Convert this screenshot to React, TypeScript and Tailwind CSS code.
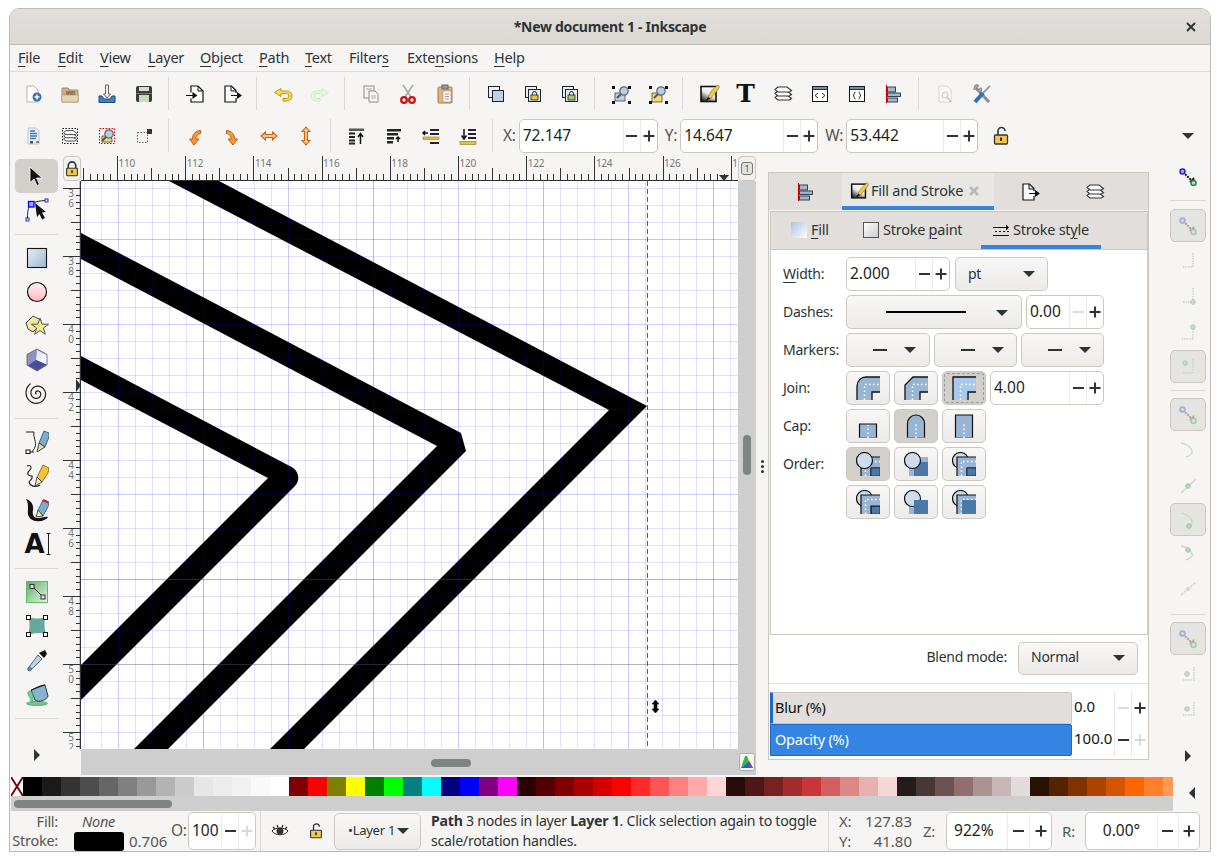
import React from "react";

const I = ({ children, s = 24, className = "" }: { children?: React.ReactNode; s?: number; className?: string }) => (
  <svg width={s} height={s} viewBox="0 0 24 24" className={"block shrink-0 " + className}>{children}</svg>
);

const Lock = ({ open = false, s = 24 }: { open?: boolean; s?: number }) => (
  <I s={s}>
    {open ? <path d="M9 11V7a3.5 3.5 0 0 1 7 0" fill="none" stroke="#2e3436" strokeWidth="1.6" /> : <path d="M7.5 11V8a4.5 4.5 0 0 1 9 0v3" fill="none" stroke="#2e3436" strokeWidth="2" />}
    <rect x="5.5" y="11" width="13" height="9" rx="1" fill="#f5c84a" stroke="#2e3436" strokeWidth="1.3" />
    <rect x="11" y="13.5" width="2" height="3.5" fill="#2e3436" />
  </I>
);

const Mag = ({ x, y }: { x: number; y: number }) => (
  <g>
    <path d={`M${x - 3} ${y + 3}L${x - 7} ${y + 7}`} stroke="#555" strokeWidth="2" />
    <circle cx={x} cy={y} r="4.2" fill="#b7cde2" stroke="#5b6770" strokeWidth="1.2" />
  </g>
);

const Corners = ({ c = "#111" }: { c?: string }) => (
  <g fill={c}>
    <rect x="3" y="4" width="3" height="3" /><rect x="19" y="4" width="3" height="3" /><rect x="3" y="19" width="3" height="3" /><rect x="19" y="19" width="3" height="3" />
  </g>
);

const Stack = () => (
  <g fill="#fff" stroke="#2e3436" strokeWidth="1.100">
    <path d="M4 15.500l3-2.500h9l4.500 3.500-2 1.500H7z" />
    <path d="M4 11.500l3-2.500h9l4.500 3.500-2 1.500H7z" />
    <path d="M4 7.500l3-2.500h9l4.500 3.500-2 1.500H7z" />
  </g>
);

const FillStrokeIcon = () => (
  <g>
    <defs><linearGradient id="fsg" x1=".7" y1="0" x2=".1" y2="1"><stop offset="0" stopColor="#fff" /><stop offset=".45" stopColor="#eee" /><stop offset="1" stopColor="#111" /></linearGradient></defs>
    <rect x="4" y="4.500" width="15" height="15" fill="url(#fsg)" stroke="#111" strokeWidth="1.600" />
    <path d="M11 15c2-5 5.500-9 10-12l1.500 1.500c-2 4-5 8-9.500 12z" fill="#f6c945" stroke="#7a5c10" strokeWidth=".6" />
    <path d="M11 15l2.500 1.500L8.500 19z" fill="#111" />
  </g>
);

const DocOut = () => (
  <I>
    <path d="M5 4h6.500L16 8.500V20H5z" fill="#fff" />
    <path d="M16 11V8.500L11.500 4H5V20H16V16" fill="none" stroke="#111" strokeWidth="1.200" />
    <path d="M11 4v5h5" fill="none" stroke="#111" />
    <path d="M11 13.500h9M17.500 11l3.500 2.500-3.500 2.500z" fill="#111" stroke="#111" strokeWidth="1.100" />
  </I>
);

const Undo = ({ flip = false, f, c }: { flip?: boolean; f: string; c: string }) => (
  <I><g transform={flip ? "translate(24 0) scale(-1 1)" : ""}><path d="M10 6.500L3.500 10.500 10 14.500v-3h5.500a2.500 2.500 0 0 1 0 5h-3.500v2.500h4a5 5 0 0 0 0-10H10z" fill={f} stroke={c} strokeWidth="1" /></g></I>
);

const Rot = ({ flip = false }: { flip?: boolean }) => (
  <I><g transform={flip ? "translate(24 0) scale(-1 1)" : ""}><path d="M11 21l-4.500-6H9.500c0-4.500 2.500-8 8-8.500v3C14 10.500 13 12 13 15h3z" fill="#f59a3c" stroke="#c25c0a" strokeWidth="1" /></g></I>
);

const Bars = ({ variant }: { variant: number }) => (
  <I>
    {variant === 1 && <g><rect x="4" y="4.500" width="15" height="2.500" fill="#555" /><rect x="4" y="8.500" width="6" height="2" fill="#222" /><rect x="4" y="12" width="6" height="2" fill="#222" /><rect x="4" y="15.500" width="6" height="2" fill="#222" /><rect x="4" y="18.500" width="6" height="2" fill="#222" /><path d="M15.500 20V11M13 13l2.500-3.500L18 13" fill="none" stroke="#111" strokeWidth="1.500" /></g>}
    {variant === 2 && <g><rect x="5" y="5" width="14" height="2.500" fill="#222" /><rect x="5" y="9" width="11" height="2.500" fill="#222" /><rect x="5" y="13" width="7" height="2.500" fill="#222" /><rect x="5" y="17" width="6" height="2.500" fill="#222" /><path d="M16 18v-5M14 15l2-2 2 2" fill="none" stroke="#111" strokeWidth="1.500" /></g>}
    {variant === 3 && <g><rect x="11" y="5" width="9" height="2" fill="#222" /><path d="M9 9H4M6 7L4 9l2 2" fill="none" stroke="#111" strokeWidth="1.500" /><rect x="11" y="9" width="9" height="2" fill="#222" /><rect x="4" y="13" width="16" height="2.500" fill="#e6c13c" stroke="#7a6512" strokeWidth=".5" /><rect x="11" y="18" width="9" height="2" fill="#222" /></g>}
    {variant === 4 && <g><rect x="12" y="5" width="8" height="2" fill="#222" /><rect x="12" y="9" width="8" height="2" fill="#222" /><rect x="12" y="13" width="8" height="2" fill="#222" /><path d="M8 5v9M5.500 11.500L8 15l2.500-3.500" fill="none" stroke="#111" strokeWidth="1.500" /><rect x="4" y="17.500" width="16" height="3" fill="#e6c13c" stroke="#7a6512" strokeWidth=".5" /></g>}
  </I>
);

const AlignI = () => (
  <I>
    <path d="M4.500 3v18" stroke="#cc0000" strokeWidth="1.100" />
    <rect x="5.500" y="5" width="8" height="5" fill="#9db8d6" stroke="#2e3436" strokeWidth=".9" />
    <rect x="5.500" y="11" width="13" height="3.500" fill="#9db8d6" stroke="#2e3436" strokeWidth=".9" />
    <rect x="5.500" y="16" width="10" height="4" fill="#9db8d6" stroke="#2e3436" strokeWidth=".9" />
  </I>
);

const icons1: (React.ReactNode | "sep")[] = [
  <I key="n"><path d="M6 4h7l4 4v12H6z" fill="#fff" stroke="#b5b5b5" /><circle cx="16" cy="15" r="4.500" fill="#3a6fb0" /><path d="M13.500 15h5M16 12.500v5" stroke="#fff" strokeWidth="1.500" /></I>,
  <I key="o"><path d="M4 6h6l2 2h8v12H4z" fill="#c9ad84" stroke="#a98f6a" /><rect x="8" y="9" width="9" height="4" fill="#7d6a4f" opacity=".75" /><path d="M3.500 13h17l-.5 7H4z" fill="#e4d3b4" stroke="#b59c77" strokeWidth=".7" /></I>,
  <I key="i"><path d="M10.500 3h3v9h2L12 16 8.500 12h2z" fill="#eeeeec" stroke="#666" /><path d="M4 14h3l2 3h6l2-3h3v6.500H4z" fill="#3f7fc4" stroke="#204a87" /></I>,
  <I key="s"><rect x="4" y="4" width="16" height="16" rx="2" fill="#3a3d3c" /><rect x="7" y="5" width="10" height="4" fill="#d8d8d8" /><rect x="7" y="13" width="10" height="7" fill="#c5dcbc" /><rect x="4" y="11" width="16" height="1" fill="#777" /></I>,
  "sep",
  <I key="im"><path d="M8 4h7l5 5v11H8z" fill="#fff" /><path d="M8 10.500V4h7l5 5v11H8v-3.500" fill="none" stroke="#111" strokeWidth="1.200" /><path d="M15 4v5h5" fill="none" stroke="#111" /><path d="M3 13.500h9M10 11l3.500 2.500L10 16z" fill="#111" stroke="#111" strokeWidth="1.100" /></I>,
  <DocOut key="ex" />,
  "sep",
  <Undo key="u" f="#f8dd56" c="#bd9a0c" />,
  <Undo key="r" flip f="#eaf4e4" c="#d3e6ca" />,
  "sep",
  <I key="cp"><rect x="5" y="4" width="10" height="12" fill="#f3f3f2" stroke="#8c8c8c" /><path d="M10 9h6l3 3v8h-9z" fill="#f9f9f9" stroke="#8c8c8c" /><path d="M12 14h5M12 16h5M7 7h6" stroke="#aaa" /></I>,
  <I key="ct"><path d="M9 15L17 3M15 15L7 3" stroke="#a8a8a8" strokeWidth="1.600" /><circle cx="8" cy="18" r="2.800" fill="none" stroke="#c81414" strokeWidth="2.300" /><circle cx="16" cy="18" r="2.800" fill="none" stroke="#c81414" strokeWidth="2.300" /></I>,
  <I key="pa"><rect x="5" y="5" width="14" height="16" rx="1" fill="#dcb57f" stroke="#a07c45" /><rect x="9" y="3" width="6" height="4" fill="#999" stroke="#666" /><rect x="10" y="9" width="8" height="11" fill="#fbfbfb" stroke="#999" strokeWidth=".7" /><path d="M12 12h4M12 14.500h4M12 17h4" stroke="#999" /></I>,
  "sep",
  <I key="d1"><rect x="4.500" y="4.500" width="11" height="11" fill="#e8eef5" stroke="#222" /><rect x="8.500" y="8.500" width="11" height="11" fill="#bcd0e6" stroke="#222" /></I>,
  <I key="d2"><rect x="4.500" y="4.500" width="11" height="11" fill="#e8eef5" stroke="#222" /><rect x="7.500" y="7.500" width="12" height="12" fill="#e8eef5" stroke="#222" /><rect x="10" y="13" width="7" height="5" fill="#f1c232" stroke="#222" strokeWidth=".8" /><path d="M11.500 13v-1.500a2 2 0 0 1 4 0V13" fill="none" stroke="#222" /></I>,
  <I key="d3"><rect x="4.500" y="4.500" width="11" height="11" fill="#e8eef5" stroke="#222" /><rect x="7.500" y="7.500" width="12" height="12" fill="#e8eef5" stroke="#222" /><rect x="10" y="13" width="7" height="5" fill="#a9c76a" stroke="#222" strokeWidth=".8" /><path d="M11.500 13v-1.500a2 2 0 0 1 4 0V13" fill="none" stroke="#222" /></I>,
  "sep",
  <I key="z1"><Corners /><rect x="6" y="11" width="10" height="8" fill="#bcd0e6" stroke="#444" strokeWidth=".8" /><Mag x={15} y={9} /></I>,
  <I key="z2"><Corners /><path d="M6 11h6l4 3v6H6z" fill="#f5d76e" stroke="#444" strokeWidth=".8" /><Mag x={15} y={9} /></I>,
  "sep",
  <I key="fs"><FillStrokeIcon /></I>,
  <span key="T" className="block w-[24px] text-center text-[25px] leading-[24px] font-bold text-[#111] [font-family:'DejaVu_Serif',serif] tracking-normal">T</span>,
  <I key="ly"><Stack /></I>,
  <I key="xml"><rect x="4.500" y="4.500" width="15" height="15" fill="#fff" stroke="#111" /><rect x="4.500" y="4.500" width="15" height="3" fill="#6f8ca8" stroke="#111" strokeWidth=".8" /><path d="M10 11l-3 2.500 3 2.500M14 11l3 2.500-3 2.500" fill="none" stroke="#222" /></I>,
  <I key="obj"><rect x="4.500" y="4.500" width="15" height="15" fill="#fff" stroke="#111" /><rect x="4.500" y="4.500" width="15" height="3" fill="#6f8ca8" stroke="#111" strokeWidth=".8" /><path d="M10.500 10c-2 0-.5 3-2.500 3.500 2 .500 .5 3.500 2.500 3.500M13.500 10c2 0 .5 3 2.500 3.500-2 .500-.5 3.500-2.500 3.500" fill="none" stroke="#222" /></I>,
  <AlignI key="al" />,
  "sep",
  <I key="dp"><g opacity=".55"><path d="M6 4h8l4 4v12H6z" fill="#fff" stroke="#bbb" /><circle cx="12" cy="13" r="3" fill="none" stroke="#999" /><path d="M14 15l4 5" stroke="#999" strokeWidth="1.500" /></g></I>,
  <I key="tl"><path d="M6 6l13 14" stroke="#8a9199" strokeWidth="3.200" /><path d="M3.500 7.500L5 3l3-.500 1 1.500-2.500 2 .5 1.500 1.500.5 2-2.500 1.500 1-1 3.500" fill="#9aa0a6" stroke="#666" strokeWidth=".5" /><path d="M20 4l-8 8" stroke="#9aa0a6" strokeWidth="1.800" /><path d="M13 11L5 20" stroke="#2f6fb5" strokeWidth="4" /></I>,
];

const icons2: (React.ReactNode | "sep")[] = [
  <I key="a"><path d="M7 4h8l3 3v13H7z" fill="#eef2f6" stroke="#b9c2cc" /><path d="M9 7h5M9 9.500h7M9 12h7M9 14.500h6" stroke="#3c78b5" strokeWidth="1.300" /><rect x="9" y="17" width="3" height="2.500" fill="#555" /><path d="M15 18h3" stroke="#111" /></I>,
  <I key="b"><rect x="4.500" y="4.500" width="15" height="15" fill="none" stroke="#111" strokeDasharray="1.500 1.500" /><g transform="translate(2.400 2.600) scale(.8)"><Stack /></g></I>,
  <I key="c"><rect x="4.500" y="4.500" width="15" height="15" fill="none" stroke="#d00" strokeDasharray="1.500 1.500" /><path d="M7 12h7l3 3v3H7z" fill="#f5d76e" stroke="#444" strokeWidth=".8" /><Mag x={14} y={10} /></I>,
  <I key="d"><rect x="5.500" y="8.500" width="10" height="10" fill="none" stroke="#666" strokeDasharray="1.500 1.500" /><rect x="15" y="5" width="5" height="5" fill="#333" /></I>,
  "sep",
  <Rot key="r1" />,
  <Rot key="r2" flip />,
  <I key="fh"><path d="M4 12l4.500-4v2.500h7V8l4.500 4-4.500 4v-2.500h-7V16z" fill="#fbc58a" stroke="#c9640e" strokeWidth="1.100" /></I>,
  <I key="fv"><path d="M12 3l4 4.500h-2.500v9H16L12 21l-4-4.500h2.500v-9H8z" fill="#fbc58a" stroke="#c9640e" strokeWidth="1.100" /></I>,
  "sep",
  <Bars key="b1" variant={1} />,
  <Bars key="b2" variant={2} />,
  <Bars key="b3" variant={3} />,
  <Bars key="b4" variant={4} />,
  "sep",
];

const ToolRow = ({ items }: { items: (React.ReactNode | "sep")[] }) => (
  <>
    {items.map((it, i) =>
      it === "sep" ? (
        <div key={i} className="ml-[6px] mr-[7px] w-px self-center h-[33px] bg-[#dcd9d5]" />
      ) : (
        <div key={i} className="w-[37px] h-[34px] flex items-center justify-center">{it}</div>
      ),
    )}
  </>
);

const MinusI = ({ off }: { off?: boolean }) => (
  <span className={"block w-[11px] h-[2px] " + (off ? "bg-[#dcdcda]" : "bg-[#2e3436]")} />
);
const PlusI = ({ off }: { off?: boolean }) => (
  <svg width="12" height="12" viewBox="0 0 12 12" className="block"><path d="M0.500 6h11M6 .5v11" stroke={off ? "#d8d8d6" : "#2e3436"} strokeWidth="2" /></svg>
);

const Spin = ({ v, w, h = "h-[34px]", b = "w-[17px]", mOff, pOff, t = "pl-[3px] text-left" }: { v: string; w: string; h?: string; b?: string; mOff?: boolean; pOff?: boolean; t?: string }) => (
  <div className={"flex shrink-0 rounded-[5px] border border-[#cdc7c2] bg-white overflow-hidden " + w + " " + h}>
    <div className={"flex-1 self-center text-[15.5px] tracking-normal text-[#1c1f20] " + t}>{v}</div>
    <div className={"border-l border-[#ecebe9] flex items-center justify-center " + b}><MinusI off={mOff} /></div>
    <div className={"border-l border-[#ecebe9] flex items-center justify-center " + b}><PlusI off={pOff} /></div>
  </div>
);

const Down = ({ c = "" }: { c?: string }) => (
  <svg width="14" height="8" viewBox="0 0 14 8" className={"block " + c}><path d="M1 1h12L7 7z" fill="#2e3436" /></svg>
);

const Btn = ({ children, w, h = "h-[34px]", active, extra = "" }: { children?: React.ReactNode; w: string; h?: string; active?: boolean; extra?: string }) => (
  <div className={"shrink-0 rounded-[5px] border border-[#cdc7c2] flex items-center " + (active ? "bg-[#d3cfcb] " : "bg-linear-to-b from-[#f8f7f6] to-[#ecebe9] ") + w + " " + h + " " + extra}>{children}</div>
);

const U = ({ children }: { children: React.ReactNode }) => <span className="underline underline-offset-[3px] decoration-1">{children}</span>;

const menus = [
  { n: <><U>F</U>ile</>, c: "w-[40px]" },
  { n: <><U>E</U>dit</>, c: "w-[42px]" },
  { n: <><U>V</U>iew</>, c: "w-[48px]" },
  { n: <><U>L</U>ayer</>, c: "w-[52px]" },
  { n: <><U>O</U>bject</>, c: "w-[59px]" },
  { n: <><U>P</U>ath</>, c: "w-[46px]" },
  { n: <><U>T</U>ext</>, c: "w-[44px]" },
  { n: <>Filter<U>s</U></>, c: "w-[58px]" },
  { n: <>Exte<U>n</U>sions</>, c: "w-[87px]" },
  { n: <><U>H</U>elp</>, c: "w-[40px]" },
];

const spiral = (() => {
  const pts: string[] = [];
  for (let t = 0.6; t < 15.2; t += 0.25) {
    const r = 0.78 * t;
    pts.push(`${(12 + r * Math.cos(t + 1.6)).toFixed(2)} ${(11.5 + r * Math.sin(t + 1.6)).toFixed(2)}`);
  }
  return "M" + pts.join("L");
})();

/* left tools */
const tools: (React.ReactNode | "sep")[] = [
  <I key="sel"><path d="M5 3v15.500l4-3.500 3 6.500 2.500-1-3-6.500H17z" fill="#111" stroke="#fff" strokeWidth=".8" /></I>,
  <I key="node"><path d="M2.500 20C2.500 13 3 10 6 6M6 6C11 3 15 3 20 2.500" fill="none" stroke="#222" /><rect x="3.500" y="3.500" width="5.500" height="5.500" fill="#a8a8ff" stroke="#00f" strokeWidth="1.300" /><rect x="20" y="1" width="3" height="3" fill="#dde" stroke="#33c" /><rect x="1" y="20" width="3" height="3" fill="#dde" stroke="#33c" /><path d="M10 5l11 9-4 .500 3 5.500-3 1.500-2.500-5.500L12 19z" fill="#111" /></I>,
  "sep",
  <I key="rect"><defs><linearGradient id="rc" x1="0" y1="0" x2="1" y2="1"><stop offset="0" stopColor="#e6eef6" /><stop offset="1" stopColor="#9ab8d4" /></linearGradient></defs><rect x="2.500" y="2.500" width="19" height="19" fill="url(#rc)" stroke="#111" strokeWidth="1.100" /></I>,
  <I key="circ"><defs><linearGradient id="ci" x1="0" y1="0" x2="0" y2="1"><stop offset="0" stopColor="#fff2f4" /><stop offset="1" stopColor="#ffb8c0" /></linearGradient></defs><circle cx="12" cy="12" r="9.500" fill="url(#ci)" stroke="#111" strokeWidth="1.200" /></I>,
  <I key="star"><path d="M1 9l7-7 8 4-2 6-6 6-5-3z" fill="#f3e6a2" stroke="#444" /><path d="M15 4l2.100 6.100 6.500.1-5.200 3.800 1.900 6.300-5.300-3.700-5.300 3.700 1.900-6.300-5.200-3.800 6.500-.1z" fill="#f6eb8c" stroke="#555" /></I>,
  <I key="box"><defs><linearGradient id="bx" x1="0" y1="0" x2="1" y2="1"><stop offset="0" stopColor="#dfe0f2" /><stop offset="1" stopColor="#fff" /></linearGradient></defs><path d="M12 1l10 5.500v10.500l-10 6-10-6V6.500z" fill="#8f8fc4" stroke="#666" strokeWidth=".9" /><path d="M12 2l9.500 5v9.500L11 12z" fill="url(#bx)" /><path d="M3 17.500l8-5.500 10.500 4.500-9.500 6z" fill="#4a4a96" /></I>,
  <I key="sp"><path d={spiral} fill="none" stroke="#222" strokeWidth="1.200" /></I>,
  "sep",
  <I key="pen"><path d="M1 2H9C8 8 12 12 10 17 9 20 8 20 7 22" fill="none" stroke="#222" /><rect x="1" y="20" width="4" height="3.500" fill="#fff" stroke="#111" /><path d="M5 22h4" stroke="#222" /><path d="M14 13L19 1l5 2v4l-4 10z" fill="#79aed0" stroke="#345" strokeWidth=".8" /><path d="M14 13l6 4-8 5z" fill="#e9d7a4" stroke="#222" strokeWidth=".8" /></I>,
  <I key="pcl"><path d="M2 2c5-2 5 3 2 5-3 3 0 5 3 5 1 4-2 4-3 6 1 4 6 6 11 3" fill="none" stroke="#222" strokeWidth="1.100" /><path d="M12 13l6-12 6 3-1 5-6 9z" fill="#f6c034" stroke="#7a5c10" strokeWidth=".8" /><path d="M10 22l2-9 5 5z" fill="#f5e9c8" stroke="#222" strokeWidth=".8" /></I>,
  <I key="cal"><path d="M1 1C5 2 9 6 8 12 7 17 9 20 13 20c4 0 7-2 10-1-2 3-7 5-12 4C5 22 2 18 3 12 3 7 3 4 1 1z" fill="#111" /><path d="M13 12l5-10 6 2-1 5-5 9z" fill="#79aed0" stroke="#345" strokeWidth=".7" /><path d="M17 3l6 2.500 .5-2L18.500 1z" fill="#c22" /><path d="M11 19l2-7 5 6z" fill="#f5e9c8" stroke="#222" strokeWidth=".8" /></I>,
  <div key="A" className="relative w-[24px] h-[24px] flex items-center">
    <span className="block w-[20px] text-center text-[26px] leading-[24px] font-bold text-[#111] tracking-normal [font-family:'DejaVu_Sans',sans-serif]">A</span>
    <svg width="5" height="22" viewBox="0 0 5 22" className="block shrink-0 ml-[1px]"><path d="M.5.5h4M2.500.5v21M.5 21.500h4" fill="none" stroke="#222" /></svg>
  </div>,
  "sep",
  <I key="grad"><defs><linearGradient id="gr" x1="0" y1="0" x2="1" y2="1"><stop offset="0" stopColor="#58b05c" /><stop offset="1" stopColor="#e8f4e8" /></linearGradient></defs><rect x="1.500" y="1.500" width="21" height="21" fill="url(#gr)" stroke="#63b866" /><path d="M7 6l11 11" stroke="#333" /><rect x="5" y="4.500" width="4" height="4" fill="#ddd" stroke="#333" /><rect x="16" y="15" width="4" height="4" fill="#ddd" stroke="#333" /></I>,
  <I key="mesh"><path d="M3.500 3C9 5 14 5 20.500 3 19 9 19 14 21 20 15 18 9 19 3 21 5 14 5 9 3.500 3z" fill="#68a69e" /><g fill="#fff" stroke="#111"><rect x="1.500" y="1.500" width="4" height="4" /><rect x="18.500" y="1.500" width="4" height="4" /><rect x="1.500" y="18.500" width="4" height="4" /><rect x="18.500" y="18.500" width="4" height="4" /></g></I>,
  <I key="dr"><path d="M13 7l4 4-10 10c-2 1.500-4 0-3-2z" fill="#bcd4ea" stroke="#345" strokeWidth=".8" /><path d="M14 5l5 5 3-4-2-4z" fill="#111" /><circle cx="4.500" cy="21" r="2" fill="#5a8bc0" stroke="#345" strokeWidth=".5" /></I>,
  <I key="bk"><ellipse cx="12" cy="21.500" rx="10.500" ry="2" fill="#7cc484" stroke="#2a6" strokeWidth=".7" /><path d="M6 8l14-5 3 11c-1 4-9 7-13 4z" fill="#85b4d4" stroke="#334" /><path d="M5 9c-2 0-3 2-2 3 1 3 3 4 3 8h2c0-5 0-8-1-10z" fill="#7fc786" stroke="#2a6" strokeWidth=".6" /><path d="M6 9c3-3 11-6 14-6" fill="none" stroke="#111" /></I>,
  "sep",
];

const ToolSep = () => (
  <div className="h-[14px] flex items-center justify-center"><div className="w-[43px] h-px bg-[#dcd9d5]" /></div>
);
const RightArrow = () => (
  <svg width="8" height="12" viewBox="0 0 8 12" className="block"><path d="M1 0l6 6-6 6z" fill="#2e3436" /></svg>
);

/* rulers */
const Ruler = () => {
  const ticks = [];
  for (let i = -5; i < 100; i++) {
    const x = 36 + i * 6.82;
    const k = i + 10;
    const len = k % 10 === 0 ? 25 : k % 5 === 0 ? 13 : 7;
    const px = Math.round(x) + 0.5;
    if (px > 0 && px < 657) ticks.push(<path key={i} d={`M${px} 25V${25 - len}`} stroke="#2e3436" />);
  }
  const labels = ["110", "112", "114", "116", "118", "120", "122", "124", "126", "12"];
  return (
    <svg width="657" height="25" className="block shrink-0">
      {ticks}
      {labels.map((l, i) => (
        <text key={l} x={36 + i * 68.2 + 1.500} y={10.500} fontSize="10" fill="#777" fontFamily="Noto Sans">{l}</text>
      ))}
      <path d="M0 25h657" stroke="#2e3436" strokeWidth="2" />
      <path d="M638 19h10l-5 6z" fill="#2e3436" />
    </svg>
  );
};

const VRuler = () => {
  const ticks = [];
  for (let i = 0; i < 83; i++) {
    const y = 7 + i * 6.8;
    const left = i % 10 === 0 ? 0 : i % 5 === 0 ? 8 : 13;
    ticks.push(<path key={i} d={`M${left} ${Math.round(y) + 0.5}H18`} stroke="#2e3436" />);
  }
  const labels = ["36", "38", "40", "42", "44", "46", "48", "50", "52"];
  return (
    <svg width="18" height="568" className="block shrink-0">
      {ticks}
      {labels.map((l, i) => (
        <text key={l} fontSize="10" fill="#777" fontFamily="Noto Sans" textAnchor="middle">
          <tspan x="8" y={15.500 + i * 68}>{l[0]}</tspan>
          <tspan x="8" y={25.500 + i * 68}>{l[1]}</tspan>
        </text>
      ))}
      <path d="M17.500 0V568" stroke="#2e3436" strokeWidth="1.500" />
      <path d="M13 198l5 6.500-5 6.500z" fill="#2e3436" />
    </svg>
  );
};

const Canvas = () => {
  const v = [];
  const h = [];
  for (let i = -8; i < 40; i++) {
    const x = Math.round(202.65 + i * 17) + 0.5;
    const m = ((i % 10) + 10) % 10;
    const op = m === 0 ? 0.28 : m === 5 ? 0.2 : 0.12;
    if (x > 81 && x < 738) v.push(<path key={i} d={`M${x} 181V749`} stroke="#0000ff" strokeOpacity={op} />);
  }
  for (let i = -4; i < 32; i++) {
    const y = Math.round(238.8 + i * 17) + 0.5;
    const m = ((i % 10) + 10) % 10;
    const op = m === 0 ? 0.24 : m === 5 ? 0.2 : 0.12;
    const grey = i === 20 || i === 25;
    if (y > 181 && y < 749) h.push(<path key={i} d={`M81 ${y}H738`} stroke={grey ? "#55557a" : "#0000ff"} strokeOpacity={grey ? 0.45 : op} />);
  }
  return (
    <svg width="657" height="568" viewBox="81 181 657 568" className="block shrink-0 bg-white">
      <path d="M169 181H219L647 406 304 749H270L609 410Z" fill="#000" />
      <path d="M81 233L461 433 466 451 168 749H134L437 446 81 259Z" fill="#000" />
      <path d="M81 356L291.600 467A12 12 0 0 1 294.500 486.500L81 700V665L268 478 81 380Z" fill="#000" />
      <g shapeRendering="crispEdges">{v}{h}</g>
      <path d="M647.500 181V749" stroke="#4a4ae0" strokeDasharray="5 3" shapeRendering="crispEdges" />
      <path d="M655.500 700l3.500 4h-2v5h2l-3.500 4-3.500-4h2v-5h-2z" fill="#000" stroke="#000" strokeWidth=".6" />
    </svg>
  );
};

/* panel icons */
const Dots = ({ d }: { d: string }) => <path d={d} fill="none" stroke="#fff" strokeWidth="1.500" strokeDasharray="1.600 2.400" />;
const Join = ({ kind, light }: { kind: number; light?: boolean }) => {
  const outer = kind === 0 ? "M1 24V10A9 9 0 0 1 10 1H24" : kind === 1 ? "M1 24V9L9 1H24" : "M1 24V1H24";
  return (
    <I>
      <path d={outer + "V16H16V24Z"} fill={light ? "#a9c9ec" : "#9ab5d4"} />
      <path d={outer} fill="none" stroke="#111" strokeWidth="1.300" />
      <path d="M24 16H16V24" fill="none" stroke="#111" strokeWidth="1.300" />
      <Dots d="M8.500 24V8.500H24" />
    </I>
  );
};
const Cap = ({ kind }: { kind: number }) => (
  <I>
    <path d={kind === 0 ? "M3.500 24V10H20.500V24Z" : kind === 1 ? "M3.500 24V9.500A8.500 8.500 0 0 1 20.500 9.500V24Z" : "M3.500 24V1H20.500V24Z"} fill="#9ab5d4" stroke="#111" strokeWidth="1.200" />
    <rect x="2" y="23.500" width="20" height="1" fill="#9ab5d4" />
    <Dots d={kind === 0 ? "M12 24V11" : "M12 24V8"} />
  </I>
);
const Order = ({ kind }: { kind: number }) => {
  const circle = <circle cx="8.500" cy="8.500" r="8" fill="#cfdcea" stroke="#111" strokeWidth="1.200" />;
  const band = (
    <g>
      <path d="M5 24V5H24V16H15V24Z" fill="#9ab5d4" />
      <path d="M5 24V5H24M24 16H15V24" fill="none" stroke="#111" strokeWidth="1.200" />
      <Dots d="M9.500 24V9.500H24" />
    </g>
  );
  const small = <path d="M15 24V16H24V24Z" fill="#4a78a8" stroke="#111" strokeWidth=".6" />;
  const big = <rect x="10" y="10" width="14" height="14" fill="#4a78a8" />;
  const sets = [
    <>{band}{small}{circle}</>,
    <><path d="M5 24V5H24V24Z" fill="#9ab5d4" />{big}{circle}</>,
    <>{circle}{band}{small}</>,
    <>{circle}{small}{band}</>,
    <><path d="M5 24V14H24V24Z" fill="#9ab5d4" />{circle}{big}</>,
    <>{circle}{band}{big}</>,
  ];
  return <I>{sets[kind]}</I>;
};

const snapNode = (fade: boolean) => (
  <I>
    <g opacity={fade ? 0.3 : 1}>
      <path d="M7 7l10 10" stroke="#111" strokeWidth="2" strokeDasharray="2 1" />
      <path d="M13 17l5-5 1 6z" fill="#111" />
      <circle cx="6.500" cy="6.500" r="2.500" fill="#aaf" stroke="#22c" strokeWidth="1.500" />
      <circle cx="17.500" cy="18" r="2.500" fill="#bdb" stroke="#284" strokeWidth="1.500" />
    </g>
  </I>
);
const Faint = ({ d, dot }: { d: string; dot?: [number, number] }) => (
  <I>
    <path d={d} fill="none" stroke="#cfcfcd" strokeWidth="1.500" strokeDasharray="1.500 1" />
    {dot && <circle cx={dot[0]} cy={dot[1]} r="2.300" fill="#c6dcc8" stroke="#b4ccb8" />}
  </I>
);
const FaintC = ({ d, dot }: { d: string; dot?: [number, number] }) => (
  <I>
    <path d={d} fill="none" stroke="#c4dcc4" strokeWidth="1.300" />
    {dot && <circle cx={dot[0]} cy={dot[1]} r="2.300" fill="#b8d4bc" stroke="#a6c6aa" />}
  </I>
);

const SnapSlot = ({ children, on, gap = "mt-[2px]" }: { children: React.ReactNode; on?: boolean; gap?: string }) => (
  <div className={"w-[36px] h-[33px] shrink-0 flex items-center justify-center rounded-[5px] " + gap + " " + (on ? "border border-[#cdc7c2] bg-[#e4e4e1]" : "")}>{children}</div>
);
const SnapSep = ({ gap }: { gap: string }) => <div className={"w-[36px] h-px bg-[#dcd9d5] shrink-0 " + gap} />;

const palette = ["#000000","#1a1a1a","#333333","#4d4d4d","#666666","#808080","#999999","#b3b3b3","#cccccc","#e6e6e6","#ececec","#f2f2f2","#f9f9f9","#ffffff","#800000","#ff0000","#808000","#ffff00","#008000","#00ff00","#008080","#00ffff","#000080","#0000ff","#800080","#ff00ff","#2b0000","#550000","#800000","#aa0000","#d40000","#ff0000","#ff2a2a","#ff5555","#ff8080","#ffaaaa","#ffd5d5","#280b0b","#501616","#782121","#a02c2c","#c83737","#d35f5f","#de8787","#e9afaf","#f4d7d7","#241c1c","#483737","#6c5353","#916f6f","#ac9393","#c8b7b7","#e3dbdb","#2b1100","#552200","#803300","#aa4400","#d45500","#ff6600","#ff7f2a","#ff9955"];

const Lbl = ({ children }: { children?: React.ReactNode }) => <div className="w-[63px] pb-[2px]">{children}</div>;

export default function App() {
  return (
    <div className="w-[1220px] h-[860px] bg-white pl-[9px] pt-[8px] overflow-hidden [font-family:'Noto_Sans',sans-serif] text-[14px] text-[#2e3436] tracking-[-0.25px]">
      <div className="w-[1202px] h-[844px] border border-[#bdb9b5] rounded-t-[10px] overflow-hidden flex flex-col bg-[#f6f5f4]">
        {/* title */}
        <div className="h-[36px] shrink-0 flex items-center justify-center relative border-b border-[#bfb9b3] bg-linear-to-b from-[#e1dedb] to-[#dcd9d5]">
          <span className="font-bold text-[14px] tracking-[-0.3px] text-[#2e3436]">*New document 1 - Inkscape</span>
          <svg width="10" height="10" viewBox="0 0 10 10" className="absolute right-[14px] top-[13px]"><path d="M1 1l8 8M9 1l-8 8" stroke="#2e3436" strokeWidth="2" /></svg>
        </div>
        {/* menu */}
        <div className="h-[27px] shrink-0 flex items-center pl-[8px] border-b border-[#dedbd7]">
          {menus.map((m, i) => (
            <div key={i} className={"shrink-0 text-[14.5px] " + m.c}>{m.n}</div>
          ))}
        </div>
        {/* toolbar 1 */}
        <div className="h-[43px] shrink-0 flex items-center pl-[4px]">
          <ToolRow items={icons1} />
        </div>
        {/* toolbar 2 */}
        <div className="h-[41px] shrink-0 flex items-center pl-[4px]">
          <ToolRow items={icons2} />
          <div className="ml-[3px] mr-[3px] text-[15.5px] text-[#555]">X:</div>
          <Spin v="72.147" w="w-[139px]" />
          <div className="ml-[7px] mr-[3px] text-[15.5px] text-[#555]">Y:</div>
          <Spin v="14.647" w="w-[138px]" />
          <div className="ml-[7px] mr-[3px] text-[15.5px] text-[#555]">W:</div>
          <Spin v="53.442" w="w-[132px]" />
          <div className="ml-[11px]"><Lock open /></div>
          <div className="ml-[168px]"><Down /></div>
        </div>
        {/* main */}
        <div className="h-[620px] shrink-0 flex">
          {/* tools */}
          <div className="w-[53px] shrink-0 flex flex-col items-center pt-[3px]">
            {tools.map((t, i) =>
              t === "sep" ? (
                <div key={i} className="w-full"><ToolSep /></div>
              ) : (
                <div key={i} className={"w-[43px] h-[34px] shrink-0 flex items-center justify-center rounded-[5px] " + (i === 0 ? "bg-[#d3cfcb]" : "")}>{t}</div>
              ),
            )}
            <div className="mt-[13px] h-[34px] flex items-center"><RightArrow /></div>
          </div>
          {/* canvas table */}
          <div className="w-[693px] shrink-0 flex flex-col">
            <div className="h-[25px] flex">
              <div className="w-[18px] h-[25px] shrink-0 rounded-[4px] border border-[#cdc7c2] bg-[#f3f1ef] flex items-center justify-center">
                <Lock s={20} />
              </div>
              <Ruler />
              <div className="w-[18px] h-[25px] shrink-0 rounded-[4px] border border-[#cdc7c2] bg-[#f3f1ef] flex items-center justify-center">
                <div className="w-[12px] h-[13px] rounded-[3px] border border-[#777] bg-[#e4e2df] text-[9px] leading-[11px] text-center text-[#555]">1</div>
              </div>
            </div>
            <div className="h-[568px] flex">
              <VRuler />
              <Canvas />
              <div className="w-[18px] shrink-0 bg-[#cecece] relative">
                <div className="absolute left-[5px] top-[254px] w-[8px] h-[40px] rounded-full bg-[#7f8482]" />
              </div>
            </div>
            <div className="h-[26px] flex">
              <div className="w-[18px] shrink-0" />
              <div className="w-[657px] shrink-0 bg-[#cecece] relative">
                <div className="absolute left-[350px] top-[10px] w-[40px] h-[8px] rounded-full bg-[#7f8482]" />
              </div>
              <div className="w-[18px] shrink-0 bg-[#cecece] flex items-center justify-center">
                <svg width="16" height="18" viewBox="0 0 16 18" className="block">
                  <rect x=".5" y=".5" width="15" height="17" rx="2" fill="#f4f4f4" stroke="#aaa" />
                  <path d="M2 15L6 3h2l2 5z" fill="#3cb43c" /><path d="M8 3l6 12-4-7z" fill="#f0d020" /><path d="M2 15l8-7 4 7z" fill="#2a5fc4" /><path d="M10 8l4 7-2 0z" fill="#e33" />
                </svg>
              </div>
            </div>
            <div className="h-px" />
          </div>
          {/* handle */}
          <div className="w-[12px] shrink-0 flex flex-col items-center justify-center">
            <div className="flex flex-col gap-[2px]">
              <span className="block w-[3px] h-[3px] rounded-full bg-[#2e3436]" />
              <span className="block w-[3px] h-[3px] rounded-full bg-[#2e3436]" />
              <span className="block w-[3px] h-[3px] rounded-full bg-[#2e3436]" />
            </div>
          </div>
          {/* panel */}
          <div className="w-[382px] shrink-0 pt-[16px]">
            <div className="w-[381px] h-[588px] border border-[#cdc7c2] flex flex-col">
              <div className="h-[37px] shrink-0 flex bg-[#e1dedb]">
                <div className="w-[73px] flex items-center justify-center"><AlignI /></div>
                <div className="w-[152px] flex items-center bg-[#e8e7e4] border-b-[4px] border-[#3584e4] pl-[6px] pt-[2px]">
                  <I s={22}><FillStrokeIcon /></I>
                  <span className="ml-[1px] text-[14.5px]">Fill and Stroke</span>
                  <svg width="10" height="10" viewBox="0 0 10 10" className="block ml-[6px]"><path d="M1 1l8 8M9 1l-8 8" stroke="#b9b9b6" strokeWidth="2.500" /></svg>
                </div>
                <div className="w-[72px] flex items-center justify-center"><DocOut /></div>
                <div className="w-[58px] flex items-center justify-center"><I><Stack /></I></div>
              </div>
              <div className="mt-px mx-px w-[378px] h-[424px] shrink-0 border border-[#cdc7c2] flex flex-col">
                <div className="h-[38px] shrink-0 flex bg-[#e1dedb] border-b border-[#cdc7c2] items-stretch">
                  <div className="w-[92px] pl-[20px] pb-[2px] flex items-center gap-[4px]">
                    <span className="block w-[16px] h-[16px] bg-linear-to-br from-[#a8c4e4] to-white" />
                    <span className="text-[14.5px]"><U>F</U>ill</span>
                  </div>
                  <div className="w-[118px] pb-[2px] flex items-center gap-[4px]">
                    <span className="block w-[16px] h-[16px] border border-[#555] bg-linear-to-br from-white to-[#ccc]" />
                    <span className="text-[14.5px]">Stroke <U>p</U>aint</span>
                  </div>
                  <div className="w-[120px] pt-[2px] flex items-center justify-center gap-[4px] border-b-[4px] border-[#3584e4]">
                    <svg width="16" height="16" viewBox="0 0 16 16" className="block"><path d="M0 5.500h13M0 9.500h16M0 13.500h16" stroke="#111" /><path d="M13 2.500l3 3-3 3z" fill="#111" /><path d="M0 9.500h16" stroke="#f0eeec" strokeDasharray="2 2" /></svg>
                    <span className="text-[14.5px]">Stroke st<U>y</U>le</span>
                  </div>
                </div>
                <div className="flex-1 bg-white pl-[12px] pt-[7px] flex flex-col gap-[4px]">
                  <div className="flex items-center">
                    <Lbl><U>W</U>idth:</Lbl>
                    <Spin v="2.000" w="w-[104px]" />
                    <Btn w="w-[93px] ml-[5px]" extra="pl-[12px] justify-between pr-[11px]"><span className="pb-[2px]">pt</span><Down /></Btn>
                  </div>
                  <div className="flex items-center">
                    <Lbl>Dashes:</Lbl>
                    <Btn w="w-[176px]" extra="relative justify-center"><span className="block w-[80px] h-[2px] bg-black mr-[16px]" /><Down c="absolute right-[12px] top-[13px]" /></Btn>
                    <div className="w-[4px]" />
                    <Spin v="0.00" w="w-[78px]" mOff />
                  </div>
                  <div className="flex items-center">
                    <Lbl>Markers:</Lbl>
                    <Btn w="w-[84px]" extra="pl-[26px] justify-between pr-[12px]"><span className="block w-[14px] h-[2px] bg-[#2e3436]" /><Down /></Btn>
                    <Btn w="w-[83px] ml-[4px]" extra="pl-[26px] justify-between pr-[11px]"><span className="block w-[14px] h-[2px] bg-[#2e3436]" /><Down /></Btn>
                    <Btn w="w-[83px] ml-[4px]" extra="pl-[26px] justify-between pr-[11px]"><span className="block w-[14px] h-[2px] bg-[#2e3436]" /><Down /></Btn>
                  </div>
                  <div className="flex items-center">
                    <Lbl>Join:</Lbl>
                    <Btn w="w-[44px]" extra="justify-center"><Join kind={0} /></Btn>
                    <Btn w="w-[44px] ml-[4px]" extra="justify-center"><Join kind={1} /></Btn>
                    <Btn w="w-[44px] ml-[4px]" active extra="justify-center outline-1 outline-dashed outline-[#9a958f] -outline-offset-3"><Join kind={2} light /></Btn>
                    <div className="w-[4px]" />
                    <Spin v="4.00" w="w-[114px]" />
                  </div>
                  <div className="flex items-center">
                    <Lbl>Cap:</Lbl>
                    <Btn w="w-[44px]" extra="justify-center"><Cap kind={0} /></Btn>
                    <Btn w="w-[44px] ml-[4px]" active extra="justify-center"><Cap kind={1} /></Btn>
                    <Btn w="w-[44px] ml-[4px]" extra="justify-center"><Cap kind={2} /></Btn>
                  </div>
                  <div className="flex items-center">
                    <Lbl>Order:</Lbl>
                    <Btn w="w-[44px]" active extra="justify-center"><Order kind={0} /></Btn>
                    <Btn w="w-[44px] ml-[4px]" extra="justify-center"><Order kind={1} /></Btn>
                    <Btn w="w-[44px] ml-[4px]" extra="justify-center"><Order kind={2} /></Btn>
                  </div>
                  <div className="flex items-center">
                    <Lbl />
                    <Btn w="w-[44px]" extra="justify-center"><Order kind={3} /></Btn>
                    <Btn w="w-[44px] ml-[4px]" extra="justify-center"><Order kind={4} /></Btn>
                    <Btn w="w-[44px] ml-[4px]" extra="justify-center"><Order kind={5} /></Btn>
                  </div>
                </div>
              </div>
              <div className="h-[49px] shrink-0 flex items-center justify-end pr-[10px] pb-[2px] border-b border-[#e4e2df] bg-white">
                <span className="mr-[11px] pb-[3px]">Blend mode:</span>
                <Btn w="w-[120px]" h="h-[33px]" extra="pl-[12px] pr-[11px] justify-between"><span className="pb-[3px]">Normal</span><Down /></Btn>
              </div>
              <div className="flex-1 bg-white pt-[8px] pl-[1px] text-[14.5px]">
                <div className="flex h-[32px]">
                  <div className="w-[302px] bg-[#e1dedb] border border-[#cdc7c2] border-l-[3px] border-l-[#1b6acb] rounded-r-[2px] flex items-center pl-[2px] text-[#111]">Blur (%)</div>
                  <div className="w-[42px] text-[15px] tracking-normal self-center pl-[2px] pb-[3px] text-[#111]">0.0</div>
                  <div className="w-[17px] border-l border-[#e8e6e3] flex items-center justify-center"><MinusI off /></div>
                  <div className="w-[17px] border-l border-[#e8e6e3] flex items-center justify-center"><PlusI /></div>
                </div>
                <div className="flex h-[32px]">
                  <div className="w-[302px] bg-[#3584e4] border border-[#1b6acb] rounded-r-[2px] flex items-center pl-[4px] text-white">Opacity (%)</div>
                  <div className="w-[42px] text-[15px] tracking-normal self-center pl-[2px] pb-[3px] text-[#111]">100.0</div>
                  <div className="w-[17px] border-l border-[#e8e6e3] flex items-center justify-center"><MinusI /></div>
                  <div className="w-[17px] border-l border-[#e8e6e3] flex items-center justify-center"><PlusI off /></div>
                </div>
              </div>
            </div>
          </div>
          {/* snap bar */}
          <div className="flex-1 flex flex-col items-center pl-[16px] pt-[4px]">
            <SnapSlot gap="">{snapNode(false)}</SnapSlot>
            <SnapSep gap="mt-[7px]" />
            <SnapSlot on gap="mt-[8px]">{snapNode(true)}</SnapSlot>
            <SnapSlot><Faint d="M17 4V18H6" /></SnapSlot>
            <SnapSlot><Faint d="M17 4V18H6" dot={[17, 18]} /></SnapSlot>
            <SnapSlot><Faint d="M17 10V20H6" dot={[17, 8]} /></SnapSlot>
            <SnapSlot on gap="mt-[3px]"><Faint d="M17 4V18H6" dot={[9, 8]} /></SnapSlot>
            <SnapSep gap="mt-[7px]" />
            <SnapSlot on gap="mt-[7px]">{snapNode(true)}</SnapSlot>
            <SnapSlot><FaintC d="M5 5c7 1 12 6 11 10-2 3-3 3-6 4" /></SnapSlot>
            <SnapSlot><FaintC d="M5 20L20 6" dot={[12, 13]} /></SnapSlot>
            <SnapSlot on><FaintC d="M5 5c7 1 12 6 11 10l-4 5" dot={[13, 18]} /></SnapSlot>
            <SnapSlot gap=""><FaintC d="M5 5c7 1 12 6 11 10-2 3-3 3-6 4" dot={[12, 9]} /></SnapSlot>
            <SnapSlot><I><path d="M5 19L20 6" stroke="#e9c8cc" strokeWidth="1.300" strokeDasharray="3 1" /><circle cx="12" cy="13" r="2" fill="#c6dcc8" /></I></SnapSlot>
            <SnapSep gap="mt-[10px]" />
            <SnapSlot on gap="mt-[7px]">{snapNode(true)}</SnapSlot>
            <SnapSlot><Faint d="M18 5V18H6" dot={[11, 12]} /></SnapSlot>
            <SnapSlot><Faint d="M18 5V18H6" dot={[11, 12]} /></SnapSlot>
            <SnapSlot gap="mt-[14px]"><RightArrow /></SnapSlot>
          </div>
        </div>
        {/* palette */}
        <div className="h-[35px] shrink-0 flex pt-px">
          <div className="ml-px w-[1162px] shrink-0 bg-[#cecece] flex flex-col overflow-hidden">
            <div className="h-[19px] flex shrink-0">
              <svg width="12" height="19" viewBox="0 0 12 19" className="block shrink-0 bg-white"><path d="M0 0L12 19M12 0L0 19" stroke="#800000" strokeWidth="2" /></svg>
              {palette.map((c, i) => (
                <span key={i} className="block w-[19px] h-[19px] shrink-0" style={{ backgroundColor: c }} />
              ))}
            </div>
            <div className="h-[15px] pt-[4px] pl-[3px]">
              <div className="w-[158px] h-[8px] rounded-full bg-[#7f8482]" />
            </div>
          </div>
          <div className="flex-1 flex items-center justify-center pb-[2px]">
            <svg width="8" height="12" viewBox="0 0 8 12" className="block"><path d="M7 0L1 6l6 6z" fill="#2e3436" /></svg>
          </div>
        </div>
        {/* status */}
        <div className="h-[40px] shrink-0 flex items-stretch text-[14.5px]">
          <div className="w-[161px] shrink-0 flex flex-col text-[#555]">
            <div className="h-[20px] flex items-center pt-[1px]">
              <div className="w-[48px] text-right">Fill:</div>
              <div className="ml-[24px] italic">None</div>
            </div>
            <div className="h-[20px] flex items-center">
              <div className="w-[48px] text-right">Stroke:</div>
              <div className="ml-[16px] w-[50px] h-[19px] bg-black rounded-[3px]" />
              <div className="ml-[5px] text-[15px] tracking-normal">0.706</div>
            </div>
          </div>
          <div className="w-[17px] shrink-0 self-center text-[15.5px] text-[#555]">O:</div>
          <div className="w-[68px] shrink-0 self-center"><Spin v="100" w="w-[68px]" h="h-[38px]" pOff /></div>
          <div className="ml-[4px] w-px bg-[#dcd9d5]" />
          <div className="w-[36px] ml-[1px] flex items-center justify-center">
            <svg width="18" height="14" viewBox="0 0 18 14" className="block"><path d="M1 7c3-4 13-4 16 0-3 5-13 5-16 0z" fill="#fff" stroke="#222" /><circle cx="9" cy="7" r="3.500" fill="#333" /><path d="M2 3l2 2M6 1l1 2.500M12 1l-1 2.500M16 3l-2 2" stroke="#222" strokeWidth="1.200" /></svg>
          </div>
          <div className="w-[35px] flex items-center justify-center"><Lock open s={20} /></div>
          <div className="ml-[1px] self-center">
            <Btn w="w-[87px]" h="h-[37px]" extra="pl-[13px] pr-[10px] justify-between"><span className="text-[13px]">•Layer 1</span><Down /></Btn>
          </div>
          <div className="w-[397px] ml-[10px] leading-[20px] text-[14.15px] self-center whitespace-nowrap">
            <b>Path</b> 3 nodes in layer <b>Layer 1</b>. Click selection again to toggle<br />scale/rotation handles.
          </div>
          <div className="w-px bg-[#dcd9d5]" />
          <div className="w-[73px] ml-[10px] flex flex-col leading-[20px] text-[15px] text-[#555]">
            <div className="flex justify-between"><span>X:</span><span className="tracking-normal">127.83</span></div>
            <div className="flex justify-between"><span>Y:</span><span className="tracking-normal">41.80</span></div>
          </div>
          <div className="ml-[11px] mr-[11px] self-center text-[15px] text-[#555]">Z:</div>
          <div className="self-center"><Spin v="922%" w="w-[106px]" h="h-[38px]" b="w-[22px]" t="pl-[7px]" /></div>
          <div className="ml-[10px] mr-[10px] self-center text-[15px] text-[#555]">R:</div>
          <div className="self-center"><Spin v="0.00°" w="w-[115px]" h="h-[38px]" b="w-[21px]" t="text-center" /></div>
        </div>
      </div>
    </div>
  );
}
